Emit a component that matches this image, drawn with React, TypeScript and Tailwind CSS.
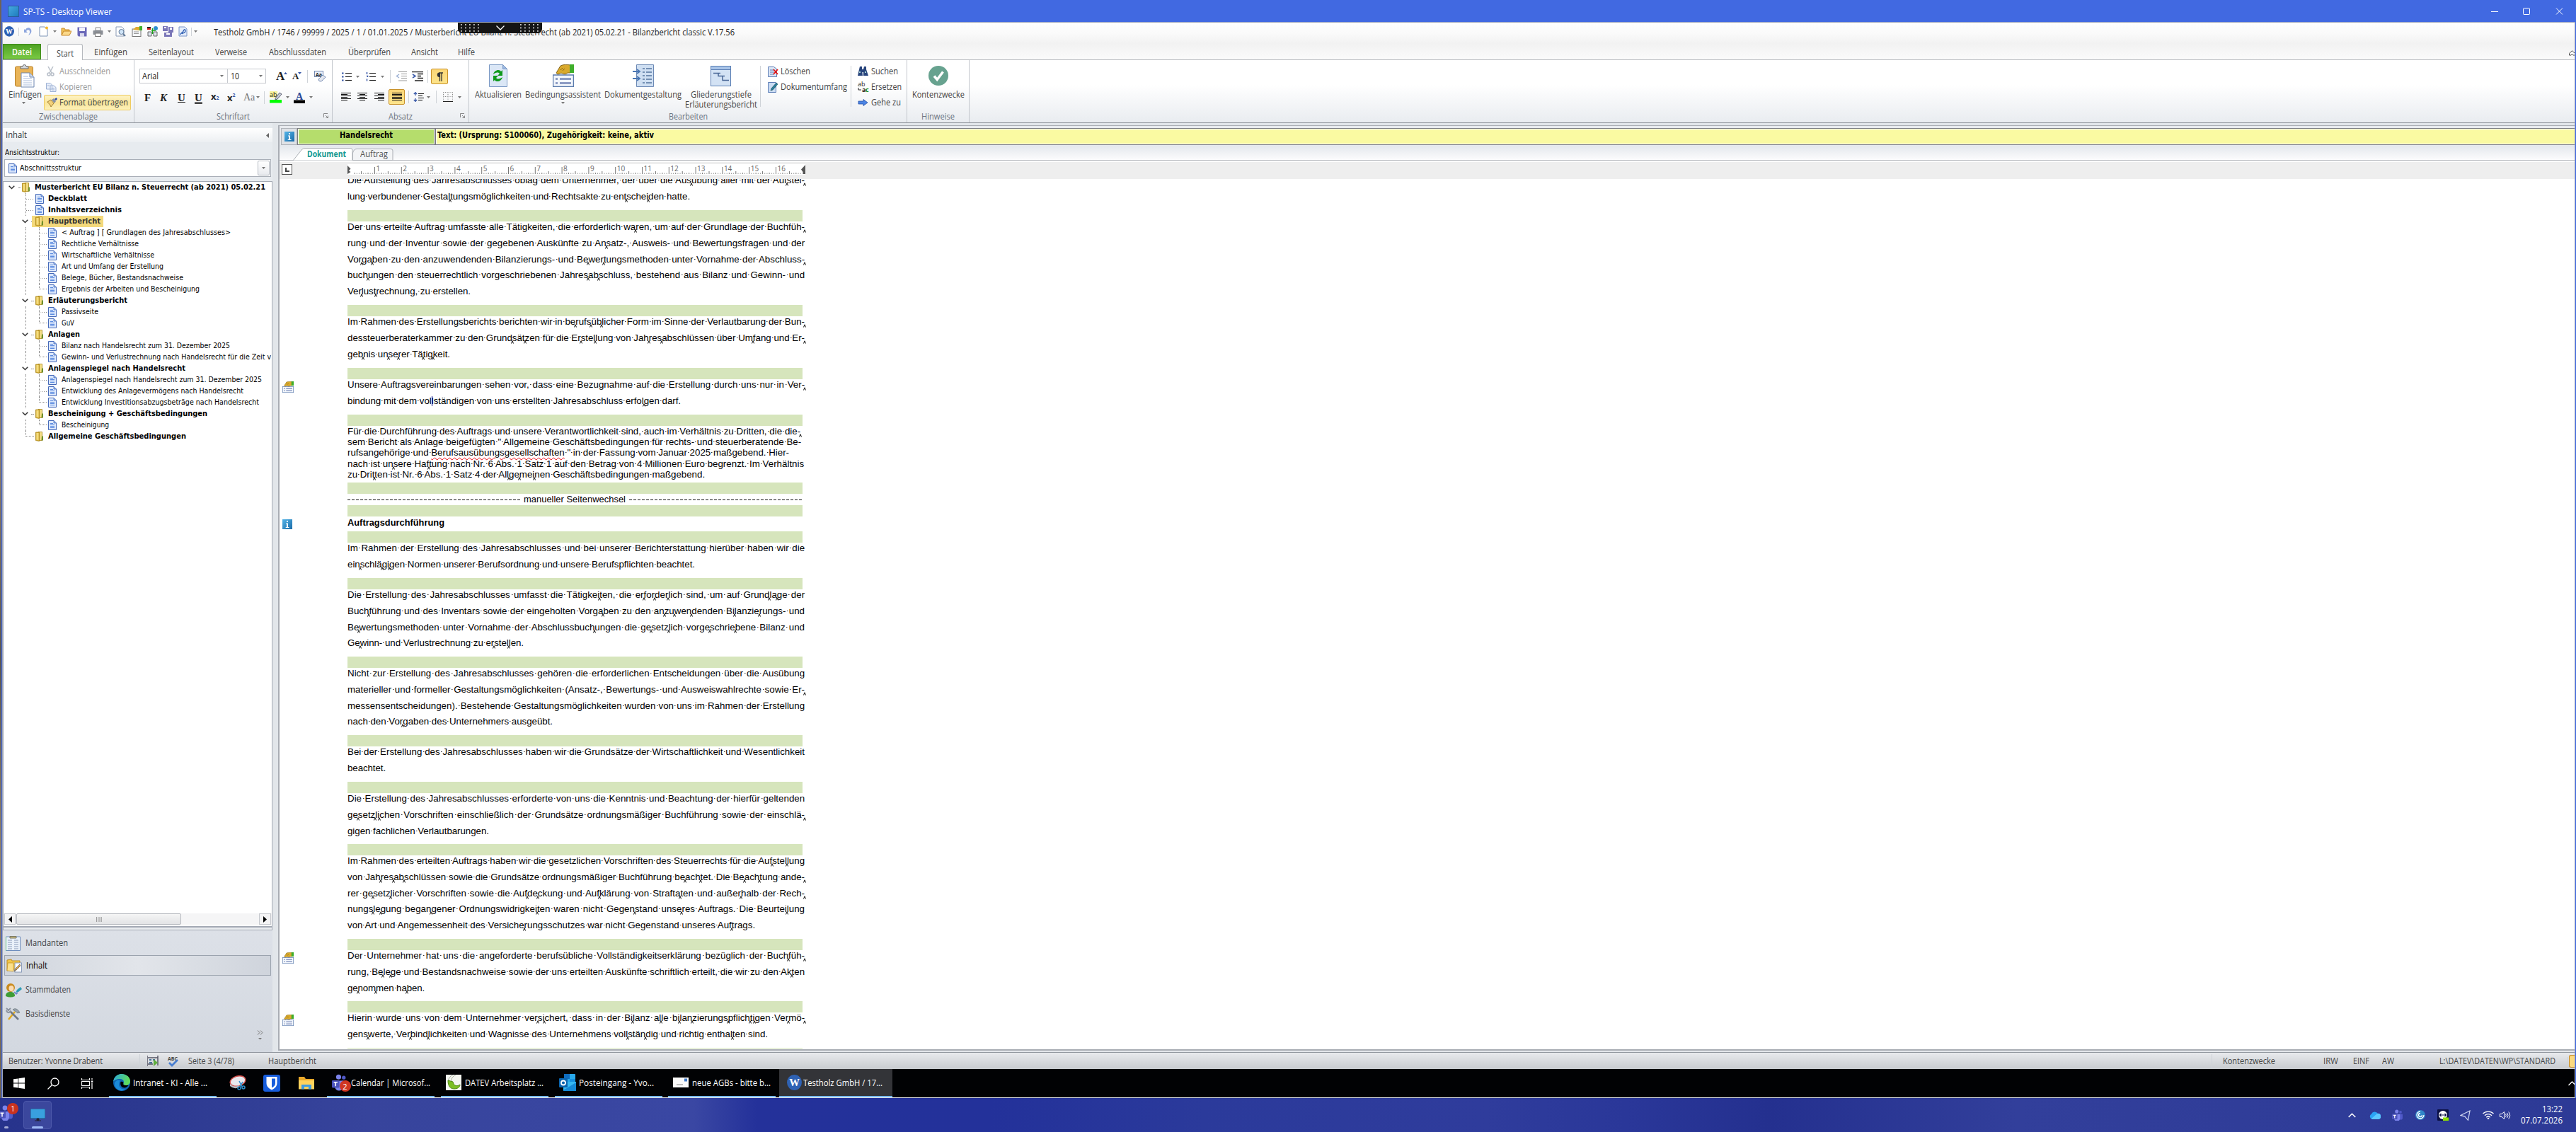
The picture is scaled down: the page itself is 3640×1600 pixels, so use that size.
import React, { useLayoutEffect, useRef, ReactNode } from "react";

const UI = "font-['Open_Sans','Noto_Sans',sans-serif]";
const TAHOMA = "font-['DejaVu_Sans_Condensed','DejaVu_Sans',sans-serif]";

/* Stretches or narrows a single line of text so that it fills its box. */
function Fit({ children, className = "" }: { children: ReactNode; className?: string }) {
  const box = useRef<HTMLSpanElement>(null);
  const txt = useRef<HTMLSpanElement>(null);
  useLayoutEffect(() => {
    const b = box.current, t = txt.current;
    if (!b || !t) return;
    t.style.transform = "none";
    t.style.transform = `scaleX(${b.clientWidth / t.getBoundingClientRect().width})`;
  }, [children]);
  return (
    <span ref={box} className={`block shrink-0 whitespace-nowrap ${className}`}>
      <span ref={txt} className="inline-block origin-left">{children}</span>
    </span>
  );
}

/* One justified line of the report; "^" marks a soft hyphen, "~" the text cursor. */
function Line({ text, className = "w-[646px] h-[23px] leading-[23px]" }: { text: string; className?: string }) {
  const box = useRef<HTMLDivElement>(null);
  const txt = useRef<HTMLSpanElement>(null);
  useLayoutEffect(() => {
    const b = box.current, t = txt.current;
    if (!b || !t) return;
    t.style.wordSpacing = "0px";
    t.style.letterSpacing = "0px";
    const diff = b.clientWidth - t.getBoundingClientRect().width;
    const gaps = (text.match(/ /g) || []).length;
    if (gaps && diff > 0) t.style.wordSpacing = `${diff / gaps}px`;
    else t.style.letterSpacing = `${diff / text.replace(/[\^~_]/g, "").length}px`;
  }, [text]);
  return (
    <div ref={box} className={`whitespace-pre ${className}`}>
      <span ref={txt} className="inline-block">
        {text.split(/([ ^~]|_[^_]+_)/).map((p, i) =>
          p === " " ? (
            <span key={i} className="bg-[linear-gradient(#333,#333)] bg-[length:1.5px_1.2px] bg-center bg-no-repeat"> </span>
          ) : p === "^" ? (
            <span key={i} className="relative">
              <svg className="absolute top-[11px] -left-[2px]" width="4" height="5" viewBox="0 0 4 5" fill="none" stroke="#111"><path d="M.5 4.500 2 .8 3.500 4.500" /></svg>
            </span>
          ) : p === "~" ? (
            <span key={i} className="relative"><span className="absolute left-0 top-px h-[14px] w-px bg-[#000080]" /></span>
          ) : p.startsWith("_") && p.length > 2 ? (
            <span key={i} className="underline decoration-red-600 decoration-wavy decoration-[0.6px] underline-offset-2">{p.slice(1, -1)}</span>
          ) : (
            p
          )
        )}
      </span>
    </div>
  );
}

const Caret = ({ className = "" }) => (
  <svg className={`shrink-0 ${className}`} width="5" height="3" viewBox="0 0 5 3"><path d="M0 0h5L2.500 3z" fill="#777" /></svg>
);
const Sep = ({ className = "" }) => <span className={`w-px shrink-0 bg-[#cfd3d8] ${className}`} />;

const Page = ({ s = 14, className = "" }) => (
  <svg className={`shrink-0 ${className}`} width={s * 0.86} height={s} viewBox="0 0 12 14">
    <path d="M.5.5h7.500l3.500 3.500v9.500H.5z" fill="#dbe7fb" stroke="#4468b8" />
    <path d="M8 .5V4h3.500" fill="#8fb0ea" stroke="#4468b8" strokeWidth=".7" />
    <path d="M3 4.500h4M3 6.500h6M3 8.500h6M3 10.500h6" stroke="#5b8be0" />
  </svg>
);
const Folder = () => (
  <svg className="shrink-0" width="12" height="14" viewBox="0 0 12 14">
    <path d="M4 .5h5.500v12H4z" fill="#f1dc84" stroke="#a88418" strokeWidth=".8" />
    <path d="M.5 1h5v12.500l-5-1z" fill="#d8b038" stroke="#a88418" strokeWidth=".8" />
    <path d="M1.500 2h3v10l-3-.500z" fill="#f3dc80" />
    <path d="M9 6.500h2v6H8.500z" fill="#6f8f2c" />
  </svg>
);
const Info = ({ className = "" }) => (
  <svg className={`shrink-0 ${className}`} width="14" height="14" viewBox="0 0 14 14">
    <defs><linearGradient id="inf" x1="0" y1="0" x2="1" y2="1"><stop stopColor="#52b4e8" /><stop offset="1" stopColor="#1c6ca8" /></linearGradient></defs>
    <rect width="14" height="14" fill="url(#inf)" />
    <path d="M6 2h2v2H6zM5 5.500h3V11h1.500v1H4.700v-1H6V6.500H5z" fill="#fff" />
  </svg>
);
const Assist = ({ w = 16, h = 16, className = "" }) => (
  <svg className={`shrink-0 ${className}`} width={w} height={h} viewBox="0 0 30 32" preserveAspectRatio="none">
    <rect x=".5" y="15" width="29" height="16.500" fill="#f2f6fc" stroke="#5b7bad" strokeWidth="1.500" />
    <path d="M4 20.500h3M4 26.500h3M10 20.500h16M10 26.500h16" stroke="#8d9cc4" strokeWidth="3" />
    <path d="M5 12c2-3 4-7 6-10 4-2 9-2 14-1v11h-4c-2 2-5 2-7 1-1-1-3-1-4 0l-3 1z" fill="#d9a92c" stroke="#7a5a10" strokeWidth=".9" />
    <path d="M11 8l3-3M14 9l3-3" stroke="#7a5a10" strokeWidth=".9" />
    <path d="M24 0h6v12h-6z" fill="#3fae2a" />
  </svg>
);
const WBadge = ({ s = 14, className = "" }) => (
  <svg className={`shrink-0 overflow-visible ${className}`} width={s} height={s * 1.05} viewBox="0 0 20 21">
    <ellipse cx="10" cy="10.500" rx="10" ry="10.500" fill="#2f62b4" />
    <text x="10" y="15.500" textAnchor="middle" fontSize="14" fontWeight="700" fill="#fff" className="font-['Liberation_Serif',serif]">W</text>
  </svg>
);
const Lines = ({ rows, className = "" }: { rows: [number, number][]; className?: string }) => (
  <svg className={`shrink-0 ${className}`} width="14" height="12" viewBox="0 0 14 12" shapeRendering="crispEdges">
    {rows.map(([a, b], i) => <path key={i} d={`M${a} ${i * 2 + 0.5}H${b}`} stroke="#111" />)}
  </svg>
);
const Teams = ({ w = 22 }) => (
  <svg className="shrink-0" width={w} height={w * 1.1} viewBox="0 0 20 22">
    <circle cx="9" cy="4" r="3.400" fill="#7b83eb" /><circle cx="16" cy="5" r="2.500" fill="#5059c9" />
    <path d="M13 9h7v7a3.500 3.500 0 0 1-7 0z" fill="#5059c9" />
    <path d="M4 9h11v8a5 5 0 0 1-11 0z" fill="#7b83eb" />
    <rect y="8.500" width="10" height="10" rx="1" fill="#4b53bc" />
    <path d="M2.500 11.200h5M5 11.200V16.500" stroke="#fff" strokeWidth="1.500" />
  </svg>
);

function TitleBar() {
  return (
    <div className={`flex h-[31px] shrink-0 items-center bg-[#4169e1] pl-[9px] text-white ${UI}`}>
      <span className="h-4 w-4 bg-linear-to-br from-[#46a8e0] to-[#1d7dbd] border border-[#2b5a9c]" />
      <Fit className="ml-[6px] w-[125px] text-[13px] leading-4">SP-TS - Desktop Viewer</Fit>
      <div className="flex-1" />
      <svg width="102" height="12" viewBox="0 0 102 12" fill="none" stroke="#fff" className="mr-[18px]"><path d="M0 6.500h10M92 1.500l9 9M101 1.500l-9 9" /><rect x="45.500" y="1.500" width="9" height="9" rx="1" /></svg>
    </div>
  );
}

function QuickBar() {
  return (
    <div className={`relative flex h-[30px] shrink-0 items-center bg-linear-to-b from-white via-[#fafafa] to-[#f2f2f2] pb-[5px] pl-[2px] ${UI}`}>
      <WBadge s={14} />
      <Sep className="ml-[6px] h-3 bg-[#aaa]" />
      <svg className="ml-[6px]" width="13" height="13" viewBox="0 0 13 13"><path d="M1 3v5h5L4 6c2-3 6-2 5 2-.300 1.500-1 2.500-2 4 4-2 5.500-6 3.500-9S4 1 2.500 4.500z" fill="#8ea6dd" /></svg>
      <svg className="ml-[9px]" width="14" height="15" viewBox="0 0 14 15"><path d="M1 1h7l4 3v10H1z" fill="#fff" stroke="#7d93b5" /><circle cx="11" cy="2.500" r="2" fill="#f5b82e" /></svg>
      <Caret className="ml-[6px]" />
      <svg className="ml-[6px]" width="15" height="13" viewBox="0 0 15 13"><path d="M1 12V2h4l1 2h6v3" fill="#f0c256" stroke="#c98a2b" /><path d="M1 12 4 6h11l-3 6z" fill="#fbd98a" stroke="#c98a2b" /></svg>
      <svg className="ml-[8px]" width="14" height="14" viewBox="0 0 14 14"><path d="M.5.5h13v13H2l-1.500-1.500z" fill="#6a68b8" /><path d="M3 1h8v5H3z" fill="#f4f4fb" /><path d="M4 9h6v5H4z" fill="#d9d9ee" /></svg>
      <svg className="ml-[8px]" width="15" height="14" viewBox="0 0 15 14"><path d="M4 1h7v4H4z" fill="#fff" stroke="#888" /><rect x=".5" y="5" width="14" height="6" rx="1" fill="#8b8f96" /><path d="M3.500 9h8v4.500h-8z" fill="#fff" stroke="#777" /></svg>
      <Caret className="ml-[6px]" />
      <svg className="ml-[6px]" width="15" height="15" viewBox="0 0 15 15"><path d="M1 1h8l3 3v10H1z" fill="#fff" stroke="#8a9bb5" /><circle cx="8.500" cy="8" r="3.500" fill="#cfe4f7" stroke="#5f7897" /><path d="m11 11 3 3" stroke="#5f7897" strokeWidth="2" /></svg>
      <svg className="ml-[8px]" width="15" height="15" viewBox="0 0 15 15"><rect x="1" y="4" width="12" height="10.500" fill="#f4f6f9" stroke="#777" /><path d="M2 5 6 1h6l-1 5z" fill="#e0a92e" /><path d="M11 0h4v6h-4z" fill="#3fae2a" /><path d="M3 8h7M3 10.500h7" stroke="#999" /></svg>
      <svg className="ml-[7px]" width="15" height="15" viewBox="0 0 15 15"><path d="M0 1h5v2H0z" fill="#222" /><path d="M0 3h5v2H0z" fill="#e32020" /><circle cx="12" cy="3" r="3" fill="#2e8fd0" /><path d="M1 8h5v6H1zM9 8h5v6H9z" fill="#dfe5ef" stroke="#444" strokeWidth=".8" /><path d="M6 6h6M7.500 3v8" stroke="#17a317" strokeWidth="1.500" /></svg>
      <svg className="ml-[7px]" width="15" height="15" viewBox="0 0 15 15"><path d="M0 0h7v7H0zM8 1h7v8H8zM2 9h11v6H2z" fill="#7b77b8" /><path d="M2 1h3v2H2zM10 2h3v3h-3zM5 10h5v2H5z" fill="#fff" /></svg>
      <svg className="ml-[7px]" width="13" height="15" viewBox="0 0 13 15"><path d="M1 1h8l3 3v10H1z" fill="#e6eefb" stroke="#7b95c6" /><path d="M3 12c0-3 3-2 4-5s3-3 3 0-4 2-5 4" fill="none" stroke="#2f5fb3" strokeWidth="1.300" /></svg>
      <Sep className="ml-[5px] h-3 bg-[#999]" />
      <Caret className="ml-[3px]" />
      <Fit className="ml-[23px] w-[736px] text-[13px] leading-4 text-[#222]">Testholz GmbH / 1746 / 99999 / 2025 / 1 / 01.01.2025 / Musterbericht EU Bilanz n. Steuerrecht (ab 2021) 05.02.21 - Bilanzbericht classic V.17.56</Fit>
      <div className="absolute left-[643px] top-0 flex h-[15px] w-[119px] items-center justify-between rounded-b-md bg-[#151515] px-[4px]">
        <Dots />
        <svg width="12" height="7" viewBox="0 0 12 7" fill="none" stroke="#fff" strokeWidth="1.300"><path d="m.5.5 5.500 5.500L11.500.5" /></svg>
        <Dots />
      </div>
    </div>
  );
}
const Dots = () => (
  <svg width="27" height="11" viewBox="0 0 27 11">
    {[0, 1, 2].map((r) => [0, 1, 2, 3, 4].map((c) => <rect key={`${r}${c}`} x={c * 6} y={r * 4.5} width="1.800" height="1.800" fill="#ccc" />))}
  </svg>
);

function Tabs() {
  const t = "text-[13px] leading-[14px] text-[#444]";
  return (
    <div className={`flex h-[23px] shrink-0 items-end border-b border-[#b6b9be] bg-linear-to-b from-[#f2f2f2] to-[#fbfbfb] ${UI}`}>
      <div className="flex h-[22px] w-[54px] items-center justify-center border border-[#3f8a1a] bg-linear-to-b from-[#4ea322] to-[#79c943]">
        <Fit className="w-[28px] text-[13px] font-semibold leading-4 text-white">Datei</Fit>
      </div>
      <div className="-mb-px ml-[9px] flex h-[23px] w-[50px] items-center justify-center rounded-t-[3px] border border-b-0 border-[#b6b9be] bg-white pt-px">
        <Fit className={`w-[24px] ${t}`}>Start</Fit>
      </div>
      <div className="flex h-[18px] items-start">
        <Fit className={`ml-[16px] w-[47px] ${t}`}>Einfügen</Fit>
        <Fit className={`ml-[30px] w-[64px] ${t}`}>Seitenlayout</Fit>
        <Fit className={`ml-[30px] w-[45px] ${t}`}>Verweise</Fit>
        <Fit className={`ml-[31px] w-[81px] ${t}`}>Abschlussdaten</Fit>
        <Fit className={`ml-[31px] w-[60px] ${t}`}>Überprüfen</Fit>
        <Fit className={`ml-[29px] w-[38px] ${t}`}>Ansicht</Fit>
        <Fit className={`ml-[28px] w-[24px] ${t}`}>Hilfe</Fit>
      </div>
      <div className="flex-1" />
      <svg className="mb-[5px]" width="8" height="8" viewBox="0 0 8 8" fill="#fff" stroke="#444"><path d="M.5 7V4.500L4.500.8l4 3.700V7H6L4.500 5.500 3 7z" /></svg>
    </div>
  );
}

function Group({ label, lw, w, children, launcher }: { label: string; lw: string; w: string; children: ReactNode; launcher?: boolean }) {
  return (
    <div className={`flex h-[88px] shrink-0 flex-col border-r border-[#c3c7cd] ${w}`}>
      <div className="h-[72px]">{children}</div>
      <div className="relative flex h-4 justify-center">
        <Fit className={`text-[12.500px] leading-4 text-[#6b7480] ${lw}`}>{label}</Fit>
        {launcher && (
          <svg className="absolute right-[5px] top-[3px]" width="7" height="7" viewBox="0 0 7 7" fill="none" stroke="#888"><path d="M.5 6V.5H6M3 3l3.500 3.500M6.500 3.500v3h-3" /></svg>
        )}
      </div>
    </div>
  );
}

const RT = "text-[12.500px] leading-4";
const serif = "font-['Liberation_Serif',serif] font-bold text-[#222] text-[15px] leading-[16px]";

function Ribbon() {
  return (
    <div className={`flex h-[89px] shrink-0 border-b border-[#8f949b] bg-linear-to-b from-white from-40% to-[#e9ecf0] text-[#444] ${UI}`}>
      <Group label="Zwischenablage" lw="w-[83px]" w="w-[186px]">
        <div className="flex">
          <div className="flex w-[58px] shrink-0 flex-col items-center pt-[6px]">
            <svg className="ml-[5px]" width="29" height="33" viewBox="0 0 29 33">
              <rect x=".5" y="3" width="25" height="28" rx="2" fill="#e9b458" stroke="#b9822b" />
              <path d="M8 6V3h3a2.500 2.500 0 0 1 5 0h3v3z" fill="#d3d8de" stroke="#666" />
              <path d="M9 12h12l6 6v14H9z" fill="#fff" stroke="#6c86b1" /><path d="M21 12v6h6" fill="#cfdcf0" stroke="#6c86b1" />
              <path d="M12 17h7M12 20h12M12 23h12M12 26h12M12 29h12" stroke="#a9bcdb" />
            </svg>
            <Fit className={`ml-[5px] mt-[2px] w-[47px] ${RT}`}>Einfügen</Fit>
            <Caret className="mt-[2px]" />
          </div>
          <div className="flex flex-col gap-0 pt-[5px]">
            <div className="flex h-[22px] items-center pl-[4px]">
              <svg width="11" height="14" viewBox="0 0 11 14" fill="none" stroke="#b8bfc9" strokeWidth="1.500"><path d="m2 0 5 9M9 0 4 9" /><circle cx="3" cy="11" r="2" /><circle cx="8" cy="11" r="2" /></svg>
              <Fit className={`ml-[7px] w-[72px] text-[#9a9a9a] ${RT}`}>Ausschneiden</Fit>
            </div>
            <div className="flex h-[22px] items-center pl-[3px]">
              <svg width="15" height="13" viewBox="0 0 15 13" fill="#e9effa" stroke="#9db1d4"><path d="M.5.5H6L8.500 3v6h-8zM6 4h5l3 2.500v6H6z" /><path d="M8 8h4M8 10h4M2 4h3" /></svg>
              <Fit className={`ml-[4px] w-[46px] text-[#9a9a9a] ${RT}`}>Kopieren</Fit>
            </div>
            <div className="flex h-[22px] w-[123px] items-center rounded-[2px] border border-[#eecb62] bg-linear-to-b from-[#fdf3c6] via-[#fbe699] to-[#fcf0b8] pl-[3px]">
              <svg width="15" height="14" viewBox="0 0 15 14"><path d="m1 6 5-3 4 5-4 5-1.500-3z" fill="#f3d179" stroke="#8a6a22" strokeWidth=".8" /><path d="m7 3 3-2 3 4-2 3z" fill="#8590a5" /><path d="m11 2 2.500-2L15 2l-2 2z" fill="#2945a5" /></svg>
              <Fit className={`ml-[3px] w-[97px] ${RT}`}>Format übertragen</Fit>
            </div>
          </div>
        </div>
      </Group>

      <Group label="Schriftart" lw="w-[47px]" w="w-[280px]" launcher>
        <div className="flex flex-col pt-[12px] text-[#222]">
          <div className="flex h-[21px] items-center pl-[7px]">
            <div className="flex h-[21px] w-[125px] items-center justify-between border border-[#c6c9ce] bg-white pl-[3px] pr-[5px]"><Fit className={`w-[23px] ${RT}`}>Arial</Fit><Caret /></div>
            <div className="-ml-px flex h-[21px] w-[55px] items-center justify-between border border-[#c6c9ce] bg-white pl-[4px] pr-[4px]"><Fit className={`w-[12px] ${RT}`}>10</Fit><Caret /></div>
            <span className={`ml-[14px] w-[11px] ${serif} !text-[17px]`}>A</span>
            <svg className="-mt-2" width="5" height="3" viewBox="0 0 5 3"><path d="M0 3h5L2.500 0z" fill="#3858a8" /></svg>
            <span className={`ml-[7px] w-[8px] ${serif} !text-[13px]`}>A</span>
            <svg className="-mt-2" width="5" height="3" viewBox="0 0 5 3"><path d="M0 0h5L2.500 3z" fill="#3858a8" /></svg>
            <Sep className="ml-[8px] h-[18px]" />
            <svg className="ml-[9px] overflow-visible" width="17" height="16" viewBox="0 0 17 16"><rect x=".5" y=".5" width="12" height="8" fill="#eaf0fa" stroke="#7288b0" /><text x="6.500" y="7.500" fontSize="7" fontWeight="700" textAnchor="middle" fill="#222">Aa</text><path d="m6 12 6-6 4 3-6 6-3-.5z" fill="#e3e7ef" stroke="#7288b0" /></svg>
          </div>
          <div className="mt-[9px] flex h-[21px] items-center pl-[14px]">
            <span className={`w-[10px] ${serif}`}>F</span>
            <span className={`ml-[12px] w-[12px] italic ${serif}`}>K</span>
            <span className={`ml-[13px] w-[11px] underline ${serif}`}>U</span>
            <span className={`ml-[13px] w-[11px] underline decoration-double ${serif}`}>U</span>
            <span className="ml-[12px] flex w-[13px] items-baseline text-[13px] font-bold leading-4">x<span className="text-[7px] text-[#3858a8]">2</span></span>
            <span className="ml-[10px] flex w-[14px] items-start text-[13px] font-bold leading-4">x<span className="-mt-[3px] text-[7px] text-[#3858a8]">2</span></span>
            <span className="ml-[9px] w-[17px] font-['Liberation_Serif',serif] text-[14px] leading-4 text-[#777]">Aa</span>
            <Caret className="ml-[1px]" />
            <Sep className="ml-[6px] h-[18px]" />
            <svg className="ml-[7px] overflow-visible" width="18" height="17" viewBox="0 0 18 17"><rect y="12" width="17" height="4.500" fill="#0f0" /><rect width="11" height="9" fill="#f6f29a" /><text x="0" y="8" fontSize="9" fill="#222">ab</text><path d="m8 10 6-8 3 2-6 7-3 1z" fill="#c3cad8" stroke="#445" strokeWidth=".8" /></svg>
            <Caret className="ml-[5px]" />
            <svg className="ml-[6px] overflow-visible" width="17" height="17" viewBox="0 0 17 17"><rect y="12.500" width="16" height="4.500" fill="#000" /><text x="8" y="11.500" fontSize="14" fontWeight="700" textAnchor="middle" fill="#2a4a98" className="font-['Liberation_Serif',serif]">A</text></svg>
            <Caret className="ml-[5px]" />
          </div>
        </div>
      </Group>

      <Group label="Absatz" lw="w-[34px]" w="w-[193px]" launcher>
        <div className="pt-[12px]">
          <div className="flex h-[22px] items-center pl-[13px]">
            <svg width="14" height="13" viewBox="0 0 14 13"><path d="M0 1.500h2.500M0 6.500h2.500M0 11.500h2.500" stroke="#3858a8" strokeWidth="2.200" /><path d="M5 1.500h9M5 6.500h9M5 11.500h9" stroke="#111" /></svg>
            <Caret className="ml-[6px]" />
            <svg className="ml-[9px]" width="15" height="13" viewBox="0 0 15 13"><path d="M1.500 0v3M1 5.500h1.500V7M1.500 9.500v3" stroke="#3858a8" strokeWidth="1.500" fill="none" /><path d="M5 1.500h9M5 6.500h9M5 11.500h9" stroke="#111" /></svg>
            <Caret className="ml-[6px]" />
            <Sep className="ml-[8px] h-[18px]" />
            <svg className="ml-[7px]" width="16" height="14" viewBox="0 0 16 14" stroke="#999" fill="none"><path d="M4 .5h12M8 3.500h8M8 6.500h8M8 9.500h8M4 13h12" /><path d="M5 4 1.500 6.500 5 9" stroke="#9db1d4" strokeWidth="1.500" /></svg>
            <svg className="ml-[7px]" width="16" height="14" viewBox="0 0 16 14" stroke="#222" fill="none"><path d="M0 .5h16M8 3.500h8M8 6.500h5M8 9.500h8M4 13h12" strokeWidth="1.300" /><path d="m1 4 4 2.500L1 9" stroke="#3858a8" strokeWidth="1.500" /></svg>
            <Sep className="ml-[6px] h-[18px]" />
            <span className="ml-[4px] flex h-[22px] w-[24px] items-center justify-center rounded-[2px] border border-[#c9922b] bg-linear-to-b from-[#fbd676] to-[#fde58c]">
              <svg width="10" height="13" viewBox="0 0 10 13"><path d="M4 1h6M5.500 1v12M8 1v12" stroke="#333" strokeWidth="1.300" /><path d="M5 .5v6.500A3.200 3.200 0 0 1 5 .5z" fill="#333" /></svg>
            </span>
          </div>
          <div className="mt-[7px] flex h-[22px] items-center pl-[12px]">
            <Lines rows={[[0, 14], [0, 9], [0, 14], [0, 9], [0, 14], [0, 9]]} />
            <Lines className="ml-[9px]" rows={[[0, 14], [3, 11], [0, 14], [3, 11], [0, 14], [3, 11]]} />
            <Lines className="ml-[10px]" rows={[[0, 14], [5, 14], [0, 14], [5, 14], [0, 14], [5, 14]]} />
            <span className="ml-[6px] flex h-[22px] w-[23px] items-center justify-center rounded-[2px] border border-[#c9922b] bg-linear-to-b from-[#fbd676] to-[#fde58c]">
              <Lines rows={[[0, 14], [0, 14], [0, 14], [0, 14], [0, 14], [0, 14]]} />
            </span>
            <Sep className="ml-[5px] h-[18px]" />
            <svg className="ml-[6px]" width="16" height="14" viewBox="0 0 16 14" fill="none"><path d="M3 0v5M3 9v5M.8 3 3 .800 5.200 3M.8 11 3 13.200 5.200 11" stroke="#3858a8" strokeWidth="1.300" /><path d="M7 2.500h8M7 5.500h6M7 8.500h8M7 11.500h6" stroke="#111" /></svg>
            <Caret className="ml-[3px]" />
            <Sep className="ml-[8px] h-[18px]" />
            <svg className="ml-[9px]" width="14" height="14" viewBox="0 0 14 14" fill="none" stroke="#888" strokeDasharray="1 1.500"><path d="M.5.500h13M.5 6.500h13M.5.500v12M7 .5v12M13.500.500v12" /><path d="M0 13.500h14" stroke="#222" strokeDasharray="none" /></svg>
            <Caret className="ml-[7px]" />
          </div>
        </div>
      </Group>

      <Group label="Bearbeiten" lw="w-[55px]" w="w-[619px]">
        <div className="flex">
          <div className="flex w-[75px] flex-col items-center pl-[7px] pt-[6px]">
            <svg width="26" height="32" viewBox="0 0 26 32"><path d="M.5.500h19l6 6v25h-25z" fill="#dbe7f6" stroke="#7b99c4" /><path d="M19.500.500v6h6z" fill="#9db9e2" stroke="#7b99c4" /><path d="M6 14c1-6 9-8 11-4l2-2v8h-7l3-3c-3-3-6-1-9 1zM19 18c-1 6-9 8-11 4l-2 2v-8h7l-3 3c3 3 6 1 9-1z" fill="#0f9a1c" /></svg>
            <Fit className={`mt-[3px] w-[66px] ${RT}`}>Aktualisieren</Fit>
          </div>
          <div className="ml-[4px] flex w-[107px] shrink-0 flex-col items-center pt-[6px]">
            <Assist w={30} h={32} />
            <Fit className={`mt-[3px] w-[107px] ${RT}`}>Bedingungsassistent</Fit>
            <Caret className="mt-[2px]" />
          </div>
          <div className="ml-[5px] flex w-[109px] shrink-0 flex-col items-center pt-[6px]">
            <svg width="30" height="32" viewBox="0 0 30 32"><path d="M5.500.500h24v31h-24z" fill="#cfdff2" stroke="#6c89b5" /><path d="M14 6h3M14 11h3M14 16h3M14 21h3M14 26h3M19 6h8M19 11h8M19 16h8M19 21h8M19 26h8" stroke="#56759f" strokeWidth="1.500" /><path d="M0 10h9M0 20h9M6 7l4 3-4 3M6 17l4 3-4 3" stroke="#4a76b3" strokeWidth="1.800" fill="none" /></svg>
            <Fit className={`mt-[3px] w-[109px] ${RT}`}>Dokumentgestaltung</Fit>
          </div>
          <div className="ml-[5px] flex w-[102px] shrink-0 flex-col items-center pt-[8px]">
            <svg width="30" height="30" viewBox="0 0 30 30"><rect x=".5" y=".5" width="28" height="28" fill="#d3e2f4" stroke="#5b7fb4" /><rect x="1" y="1" width="27" height="4" fill="#a9c5e8" /><path d="M1 5.500h27" stroke="#5b7fb4" /><path d="M4 10.500h7v4h6v6h9M11 10.500h3M17 14.500h3" stroke="#4a6796" strokeWidth="1.500" fill="none" /></svg>
            <Fit className={`mt-[4px] w-[86px] !leading-[14px] ${RT}`}>Gliederungstiefe</Fit>
            <Fit className={`w-[102px] !leading-[13px] ${RT}`}>Erläuterungsbericht</Fit>
          </div>
          <Sep className="ml-[4px] mt-[8px] h-[58px]" />
          <div className="ml-[10px] flex flex-col pt-[5px]">
            <div className="flex h-[22px] items-center"><svg width="15" height="15" viewBox="0 0 15 15"><path d="M.5.500h8l4 3v11H.5z" fill="#dce6f5" stroke="#5c7db5" /><path d="M3 5h6M3 8h6M3 11h6" stroke="#5c7db5" /><path d="m8 4 6 7M14 4l-6 7" stroke="#e31616" strokeWidth="1.800" /></svg><Fit className={`ml-[3px] w-[42px] ${RT}`}>Löschen</Fit></div>
            <div className="flex h-[22px] items-center"><svg width="15" height="15" viewBox="0 0 15 15"><path d="M.5.500h11v14H.5z" fill="#cbdcf3" stroke="#5c7db5" /><path d="m4 12 1-3 7-8 2 2-7 8z" fill="#2c7d9d" stroke="#144" strokeWidth=".6" /></svg><Fit className={`ml-[3px] w-[94px] ${RT}`}>Dokumentumfang</Fit></div>
          </div>
          <Sep className="ml-[5px] mt-[8px] h-[58px]" />
          <div className="ml-[9px] flex flex-col pt-[5px]">
            <div className="flex h-[22px] items-center"><svg width="15" height="14" viewBox="0 0 15 14"><path d="M3 0h3v4l1 9H0l2-9zM9 0h3v4l3 9H8V4z" fill="#27447c" /><path d="M6 4h3v4H6z" fill="#27447c" /><path d="M2 8h2M10 8h2" stroke="#cfe" strokeWidth="1.500" /></svg><Fit className={`ml-[4px] w-[38px] ${RT}`}>Suchen</Fit></div>
            <div className="flex h-[22px] items-center"><svg className="overflow-visible" width="15" height="16" viewBox="0 0 15 16"><text x="0" y="7" fontSize="9" fill="#222">ab</text><text x="6" y="15" fontSize="9" fontWeight="700" fill="#222">a</text><text x="11" y="15" fontSize="9" fontWeight="700" fill="#178f17">c</text><path d="M1 9v3h4" stroke="#222" fill="none" /></svg><Fit className={`ml-[4px] w-[43px] ${RT}`}>Ersetzen</Fit></div>
            <div className="flex h-[22px] items-center"><svg width="15" height="10" viewBox="0 0 15 10"><path d="M1 3h7V.5L14 5 8 9.500V7H1z" fill="#4b84e4" stroke="#234ea5" strokeWidth=".8" /></svg><Fit className={`ml-[4px] w-[42px] ${RT}`}>Gehe zu</Fit></div>
          </div>
        </div>
      </Group>

      <Group label="Hinweise" lw="w-[47px]" w="w-[88px]">
        <div className="flex flex-col items-center pt-[8px]">
          <svg width="28" height="28" viewBox="0 0 28 28"><circle cx="14" cy="14" r="14" fill="#67a28f" /><path d="m8 14.500 4.200 5L20.500 8.500" stroke="#fff" strokeWidth="3.500" fill="none" /></svg>
          <Fit className={`mt-[5px] w-[74px] ${RT}`}>Kontenzwecke</Fit>
        </div>
      </Group>
    </div>
  );
}

/* [level, folder?, open?, label, width class] */
const TREE: [number, boolean, boolean, string, string][] = [
  [0, true, true, "Musterbericht EU Bilanz n. Steuerrecht (ab 2021) 05.02.21", "w-[326px]"],
  [1, false, false, "Deckblatt", "w-[55px]"],
  [1, false, false, "Inhaltsverzeichnis", "w-[104px]"],
  [1, true, true, "Hauptbericht", "w-[74px]"],
  [2, false, false, "< Auftrag ] [ Grundlagen des Jahresabschlusses>", "w-[239px]"],
  [2, false, false, "Rechtliche Verhältnisse", "w-[109px]"],
  [2, false, false, "Wirtschaftliche Verhältnisse", "w-[131px]"],
  [2, false, false, "Art und Umfang der Erstellung", "w-[144px]"],
  [2, false, false, "Belege, Bücher, Bestandsnachweise", "w-[172px]"],
  [2, false, false, "Ergebnis der Arbeiten und Bescheinigung", "w-[195px]"],
  [1, true, true, "Erläuterungsbericht", "w-[112px]"],
  [2, false, false, "Passivseite", "w-[52px]"],
  [2, false, false, "GuV", "w-[18px]"],
  [1, true, true, "Anlagen", "w-[45px]"],
  [2, false, false, "Bilanz nach Handelsrecht zum 31. Dezember 2025", "w-[238px]"],
  [2, false, false, "Gewinn- und Verlustrechnung nach Handelsrecht für die Zeit v", "w-[296px]"],
  [1, true, true, "Anlagenspiegel nach Handelsrecht", "w-[194px]"],
  [2, false, false, "Anlagenspiegel nach Handelsrecht zum 31. Dezember 2025", "w-[283px]"],
  [2, false, false, "Entwicklung des Anlagevermögens nach Handelsrecht", "w-[257px]"],
  [2, false, false, "Entwicklung Investitionsabzugsbeträge nach Handelsrecht", "w-[279px]"],
  [1, true, true, "Bescheinigung + Geschäftsbedingungen", "w-[225px]"],
  [2, false, false, "Bescheinigung", "w-[67px]"],
  [1, true, false, "Allgemeine Geschäftsbedingungen", "w-[195px]"],
];

function TreeRow({ i }: { i: number }) {
  const [lvl, folder, open, label, w] = TREE[i];
  const bold = lvl < 2;
  const lastAll = i === TREE.length - 1;
  const lastSub = lvl === 2 && (i + 1 >= TREE.length || TREE[i + 1][0] !== 2);
  const hi = label === "Hauptbericht";
  return (
    <div className="flex h-4 items-center">
      {lvl === 0 ? (
        <span className="flex w-[26px] items-center pl-[7px]"><Chevron /><span className="ml-[5px] w-[4px] border-t border-dotted border-[#888]" /></span>
      ) : lvl === 1 ? (
        open ? (
          <span className="flex w-[45px] items-center pl-[26px]"><Chevron /><span className="ml-[4px] w-[4px] border-t border-dotted border-[#888]" /></span>
        ) : (
          <span className="flex h-4 w-[45px] pl-[31px]">
            <span className={`w-[12px] border-l border-dotted border-[#888] ${lastAll ? "h-2 border-b" : "h-4 bg-[repeating-linear-gradient(90deg,#888_0_1px,transparent_1px_3px)] bg-[length:100%_1px] bg-[position:0_8px] bg-no-repeat"}`} />
          </span>
        )
      ) : (
        <span className="flex h-4 w-[63px] pl-[31px]">
          <span className={`h-4 w-[19px] ${i < 22 ? "border-l border-dotted border-[#888]" : ""}`} />
          <span className={`w-[11px] border-l border-dotted border-[#888] ${lastSub ? "h-2 border-b" : "h-4 bg-[repeating-linear-gradient(90deg,#888_0_1px,transparent_1px_3px)] bg-[length:100%_1px] bg-[position:0_8px] bg-no-repeat"}`} />
        </span>
      )}
      <span className={`flex h-4 items-center ${hi ? "-ml-[5px] bg-[#f3d97c] pl-[5px] pr-[4px] text-[#333]" : ""}`}>
        {folder ? <Folder /> : <Page s={14} />}
        <Fit className={`text-[11px] leading-4 ${bold ? "ml-[6px] font-bold" : "ml-[7px]"} ${w}`}>{label}</Fit>
      </span>
    </div>
  );
}
const Chevron = () => <svg className="shrink-0" width="9" height="6" viewBox="0 0 9 6" fill="none" stroke="#333" strokeWidth="1.500"><path d="m.7.7 3.800 3.800L8.300.7" /></svg>;

function NavRow({ icon, label, w, active }: { icon: ReactNode; label: string; w: string; active?: boolean }) {
  return (
    <div className={`mx-[2px] flex shrink-0 items-center pl-[2px] ${active ? "mb-[3px] h-[29px] border border-[#9ba3ae] bg-linear-to-r from-[#d0d5dd] via-[#e2e5ea] to-[#cfd4dc] text-black" : "h-[34px] text-[#444]"}`}>
      <span className="w-[23px]">{icon}</span>
      <Fit className={`ml-[5px] text-[12.500px] leading-4 ${w}`}>{label}</Fit>
    </div>
  );
}

function Sidebar() {
  return (
    <div className={`flex w-[381px] shrink-0 flex-col bg-[#e7ebef] pt-[7px] text-black ${TAHOMA}`}>
      <div className={`flex h-[20px] items-center justify-between bg-linear-to-b from-white to-[#eceff2] pl-[4px] pr-[5px] ${UI}`}>
        <Fit className="w-[30px] text-[12.500px] leading-4 text-[#333]">Inhalt</Fit>
        <svg width="4" height="7" viewBox="0 0 4 7"><path d="M4 0v7L0 3.500z" fill="#666" /></svg>
      </div>
      <Fit className="ml-[3px] mt-[7px] w-[77px] text-[11px] leading-4">Ansichtsstruktur:</Fit>
      <div className="ml-[2px] mt-px flex h-[25px] w-[377px] items-center border border-[#a9afb8] bg-white pl-[5px]">
        <Page s={14} />
        <Fit className="ml-[4px] w-[87px] text-[11px] leading-4">Abschnittsstruktur</Fit>
        <span className="ml-auto mr-px flex h-[21px] w-[17px] items-center justify-center rounded-[2px] border border-[#b5bac2] bg-linear-to-b from-white to-[#e8eaee]"><Caret /></span>
      </div>
      <div className="mt-[6px] flex h-[1054px] shrink-0 flex-col overflow-hidden border border-[#a3a9b3] bg-white">
        {TREE.map((_, i) => <TreeRow key={i} i={i} />)}
        <div className="mt-auto mb-[2px] flex h-[16px] items-stretch bg-[#f5f5f6] pl-[1px] pr-[1px]">
          <span className="flex w-[16px] items-center justify-center border border-[#c5c8cd] bg-[#f3f3f4]"><svg width="5" height="9" viewBox="0 0 5 9"><path d="M5 0v9L0 4.500z" /></svg></span>
          <span className="ml-px flex w-[233px] items-center justify-center rounded-[2px] border border-[#b4b7bd] bg-linear-to-b from-[#f5f5f5] to-[#e2e3e5]"><svg width="8" height="7" viewBox="0 0 8 7"><path d="M.5 0v7M2.800 0v7M5 0v7M7.300 0v7" stroke="#888" strokeWidth=".8" /></svg></span>
          <span className="ml-auto flex w-[17px] items-center justify-center border border-[#c5c8cd] bg-[#f3f3f4]"><svg width="5" height="9" viewBox="0 0 5 9"><path d="M0 0v9l5-4.500z" /></svg></span>
        </div>
      </div>
      <div className={`flex min-h-0 flex-1 flex-col bg-linear-to-b from-[#dde1e8] to-[#d3d8e0] ${UI}`}>
        <div className="mb-px h-[5px] shrink-0 border border-[#a3a9b3] bg-[#e8ebef]" />
        <NavRow label="Mandanten" w="w-[60px]" icon={<svg width="21" height="22" viewBox="0 0 21 22"><path d="M.5 2h20v19.500H.5z" fill="#eaf1fa" stroke="#6d8dbd" /><path d="M0 2v20" stroke="#6cc287" strokeWidth="2" /><path d="M6 4V1.500h9V4z" fill="#cdbb7d" stroke="#776" /><path d="M3 7h6M3 10h6M3 13h6M3 16h6M12 7h6M12 10h6M12 13h6M12 16h6M3 19h6M12 19h6" stroke="#8a9cba" /></svg>} />
        <NavRow active label="Inhalt" w="w-[30px]" icon={<svg width="22" height="20" viewBox="0 0 22 20"><path d="M1 17V2l6-1 1 2h11v12H9z" fill="#f2c648" stroke="#bf8e23" /><path d="m1 17 1-11h8v12z" fill="#fbe08b" stroke="#bf8e23" strokeWidth=".7" /><rect x="12" y="6" width="9.500" height="13" fill="#fdfdff" stroke="#8a9cba" /><path d="m11 18 2-4 6-6 1 2-6 6z" fill="#e0a54b" stroke="#555" strokeWidth=".7" /></svg>} />
        <NavRow label="Stammdaten" w="w-[64px]" icon={<svg width="23" height="21" viewBox="0 0 23 21"><path d="M0 19c0-5 3-6 7-6s6 2 6 6q-6 3-13 0z" fill="#3f9c35" /><circle cx="7" cy="7" r="6" fill="#c98a1c" /><ellipse cx="8" cy="8" rx="3.500" ry="4" fill="#fbdcb5" /><path d="m14 14 2-4 5-4 2 3-5 4z" fill="#2f9cb5" /><path d="m12 13 3 3 2-2" stroke="#6779c4" fill="none" strokeWidth="1.500" /></svg>} />
        <NavRow label="Basisdienste" w="w-[63px]" icon={<svg width="22" height="20" viewBox="0 0 22 20"><path d="m4 18 9-11" stroke="#e2aa1e" strokeWidth="2.500" /><path d="m18 18-12-12" stroke="#6f7784" strokeWidth="2.500" /><path d="M1 2l3 3 3-3M1 5c1 4 5 4 6 1" stroke="#8b93a0" strokeWidth="2" fill="none" /><path d="M10 4q5-4 10 4l-3 1-4-3z" fill="#9aa3b0" stroke="#566" strokeWidth=".6" /></svg>} />
        <svg className="ml-auto mr-[13px] mt-[6px] shrink-0" width="9" height="14" viewBox="0 0 9 14" fill="none" stroke="#777"><path d="m1 .5 3 3-3 3M5 .5l3 3-3 3" /><path d="M2 11h5l-2.500 2.500z" fill="#777" stroke="none" /></svg>
      </div>
    </div>
  );
}

function Ruler() {
  const marks: ReactNode[] = [];
  for (let i = 1; i < 68; i++) {
    const x = i * 9.45 + 0.7;
    const cm = i / 4;
    if (i % 4 === 0) {
      marks.push(<path key={i} d={`M${x} 4v10`} stroke="#777" />);
      marks.push(<text key={`t${i}`} x={x + 2} y="9.500" fontSize="10" fill="#666">{cm}</text>);
    } else marks.push(<path key={i} d={`M${x} ${i % 2 === 0 ? 10 : 12}V14`} stroke="#777" />);
    marks.push(<path key={`a${i}`} d={`M${x + 3.15} 12.5V14M${x + 6.3} 12.5V14`} stroke="#999" />);
  }
  return (
    <svg width="647" height="15" viewBox="0 0 647 15" className={`overflow-visible bg-white ${UI}`}>
      {marks}
      <path d="M0 2l4.500 4.500L0 11zM0 8l4.500 3-4.500 3z" fill="#555" />
      <path d="M647 1v13h-3.500V11L641 7.500 647 1z" fill="#555" />
    </svg>
  );
}

const F2 = "w-[646px] h-[22px] leading-[22px]";
const Green = ({ h = "h-[16px]" }) => <div className={`ml-[96px] w-[643px] bg-[#d6e5bc] ${h}`} />;
const Para = ({ h, icon, children }: { h: string; icon?: ReactNode; children: ReactNode }) => (
  <div className={`flex ${h}`}>
    <div className="w-[96px] shrink-0 pl-[4px] pt-[3px]">{icon}</div>
    <div className="-mt-[4px]">{children}</div>
  </div>
);

function Report() {
  return (
    <div className="min-h-0 flex-1 overflow-hidden bg-white font-['Liberation_Sans',Arial,sans-serif] text-[13.333px] text-black">
      <div className="-mt-[5px]">
        <Para h="h-[49px]">
          <Line text="Die Aufstellung des Jahresabschlusses oblag dem Unternehmer, der über die Aus^übung aller mit der Auf^stel-^" className={F2} />
          <Line text="lung verbundener Gestal^tungsmöglichkeiten und Rechtsakte zu ent^schei^den hatte." className="h-[23px] w-[484px] leading-[23px]" />
        </Para>
        <Green />
        <Para h="h-[118px]">
          <Line text="Der uns erteilte Auftrag umfasste alle Tätigkeiten, die erforderlich wa^ren, um auf der Grundlage der Buchfüh-^" />
          <Line text="rung und der Inventur sowie der gegebenen Auskünfte zu An^satz-, Ausweis- und Bewertungsfragen und der" />
          <Line text="Vor^ga^ben zu den anzuwendenden Bilanzierungs- und Be^wer^tungsmethoden unter Vornahme der Abschluss-^" />
          <Line text="buch^ungen den steuerrechtlich vorgeschriebenen Jahres^ab^schluss, bestehend aus Bilanz und Gewinn- und" className={F2} />
          <Line text="Ver^lust^rechnung, zu erstellen." className="h-[23px] w-[174px] leading-[23px]" />
        </Para>
        <Green />
        <Para h="h-[73px]">
          <Line text="Im Rahmen des Erstellungsberichts berichten wir in be^rufs^üb^licher Form im Sinne der Verlautbarung der Bun-^" />
          <Line text="dessteuerberaterkammer zu den Grund^sät^zen für die Er^stel^lung von Jah^res^abschlüssen über Um^fang und Er-^" />
          <Line text="geb^nis un^se^rer Tä^tig^keit." className="h-[23px] w-[145px] leading-[23px]" />
        </Para>
        <Green />
        <Para h="h-[50px]" icon={<Assist />}>
          <Line text="Unsere Auftragsvereinbarungen sehen vor, dass eine Bezugnahme auf die Erstellung durch uns nur in Ver-^" />
          <Line text="bindung mit dem vol~lständigen von uns erstellten Jahresabschluss erfol^gen darf." className="h-[23px] w-[471px] leading-[23px]" />
        </Para>
        <Green />
        <div className="ml-[96px] h-[80px]">
          <Line text="Für die Durchführung des Auftrags und unsere Verantwortlichkeit sind, auch im Verhältnis zu Dritten, die die-^" className="h-[15px] w-[640px] leading-[15px]" />
          <Line text={'sem Bericht als Anlage beigefügten " Allgemeine Geschäftsbedingungen für rechts- und steuerberatende Be-'} className="h-[15px] w-[641px] leading-[15px]" />
          <Line text={'rufsangehörige und _Berufsausübungsgesellschaften_ " in der Fassung vom Januar 2025 maßgebend. Hier-'} className="h-[16px] w-[624px] leading-[15px]" />
          <Line text="nach ist un^sere Haf^tung nach Nr. 6 Abs. 1 Satz 1 auf den Betrag von 4 Millionen Euro begrenzt. Im Verhältnis" className="h-[15px] w-[645px] leading-[15px]" />
          <Line text="zu Drit^ten ist Nr. 6 Abs. 1 Satz 4 der All^ge^mei^nen Geschäftsbedingungen maßgebend." className="h-[15px] w-[505px] leading-[15px]" />
        </div>
        <Green />
        <div className="ml-[96px] flex h-[16px] w-[642px] items-center">
          <span className="h-px flex-1 bg-[repeating-linear-gradient(90deg,#111_0_4px,transparent_4px_6px)]" />
          <Fit className="mx-[5px] w-[144px] leading-4">manueller Seitenwechsel</Fit>
          <span className="h-px flex-1 bg-[repeating-linear-gradient(90deg,#111_0_4px,transparent_4px_6px)]" />
        </div>
        <Green />
        <Para h="h-[21px]" icon={<Info className="mt-px" />}>
          <Fit className="mt-[4px] w-[137px] font-bold leading-[17px]">Auftragsdurchführung</Fit>
        </Para>
        <Green />
        <Para h="h-[50px]">
          <Line text="Im Rahmen der Erstellung des Jahresabschlusses und bei unserer Berichterstattung hierüber haben wir die" />
          <Line text="ein^schlä^gi^gen Normen unserer Berufsordnung und unsere Berufspflichten beachtet." className="h-[23px] w-[491px] leading-[23px]" />
        </Para>
        <Green />
        <Para h="h-[95px]">
          <Line text="Die Erstellung des Jahresabschlusses umfasst die Tätigkei^ten, die er^for^der^lich sind, um auf Grund^la^ge der" />
          <Line text="Buch^führung und des Inventars sowie der eingeholten Vorga^ben zu den an^zu^wen^denden Bi^lanzie^rungs- und" />
          <Line text="Be^wertungsmethoden unter Vornahme der Abschlussbuch^ungen die ge^setz^lich vorge^schrie^bene Bilanz und" />
          <Line text="Ge^winn- und Verlustrechnung zu er^stel^len." className="h-[22px] w-[249px] leading-[22px]" />
        </Para>
        <Green />
        <Para h="h-[95px]">
          <Line text="Nicht zur Erstellung des Jahresabschlusses gehören die erforderlichen Entscheidungen über die Ausübung" />
          <Line text="materieller und formeller Gestaltungsmöglichkeiten (Ansatz-, Bewertungs- und Ausweiswahlrechte sowie Er-^" />
          <Line text="messensentscheidungen). Bestehende Gestaltungsmöglichkeiten wurden von uns im Rahmen der Erstellung" />
          <Line text="nach den Vor^gaben des Unternehmers ausgeübt." className="h-[22px] w-[290px] leading-[22px]" />
        </Para>
        <Green />
        <Para h="h-[50px]">
          <Line text="Bei der Erstellung des Jahresabschlusses haben wir die Grundsätze der Wirtschaftlichkeit und Wesentlichkeit" />
          <Line text="beachtet." className="h-[23px] w-[54px] leading-[23px]" />
        </Para>
        <Green />
        <Para h="h-[72px]">
          <Line text="Die Erstellung des Jahresabschlusses erforderte von uns die Kenntnis und Beachtung der hierfür geltenden" />
          <Line text="ge^setz^li^chen Vorschriften einschließlich der Grundsätze ordnungsmäßiger Buchführung sowie der einschlä-^" />
          <Line text="gigen fachlichen Verlautbarungen." className="h-[23px] w-[200px] leading-[23px]" />
        </Para>
        <Green />
        <Para h="h-[118px]">
          <Line text="Im Rahmen des erteilten Auftrags haben wir die gesetzlichen Vorschriften des Steuerrechts für die Auf^stel^lung" />
          <Line text="von Jah^res^ab^schlüssen sowie die Grundsätze ordnungsmäßiger Buchführung be^ach^tet. Die Be^ach^tung ande-^" />
          <Line text="rer ge^setz^licher Vorschriften sowie die Auf^de^ckung und Auf^klärung von Strafta^ten und außer^halb der Rech-^" />
          <Line text="nungs^le^gung began^gener Ordnungswidrigkei^ten waren nicht Gegen^stand unse^res Auftrags. Die Beurtei^lung" className={F2} />
          <Line text="von Art und Angemessenheit des Versiche^rungsschutzes war nicht Gegenstand unseres Auf^trags." className="h-[23px] w-[576px] leading-[23px]" />
        </Para>
        <Green />
        <Para h="h-[72px]" icon={<Assist />}>
          <Line text="Der Unternehmer hat uns die angeforderte berufsübliche Vollständigkeitserklärung bezüglich der Buch^füh-^" />
          <Line text="rung, Be^le^ge und Bestandsnachweise sowie der uns erteilten Auskünfte schriftlich erteilt, die wir zu den Ak^ten" />
          <Line text="ge^nom^men ha^ben." className="h-[23px] w-[109px] leading-[23px]" />
        </Para>
        <Green />
        <Para h="h-[50px]" icon={<Assist />}>
          <Line text="Hierin wurde uns von dem Unternehmer ver^si^chert, dass in der Bi^lanz al^le bi^lan^zierungs^pflich^ti^gen Ver^mö-^" />
          <Line text="gens^werte, Ver^bind^lichkeiten und Wagnisse des Unternehmens voll^stän^dig und richtig enthal^ten sind." className="h-[23px] w-[594px] leading-[23px]" />
        </Para>
        <Green h="h-px" />
      </div>
    </div>
  );
}

function Editor() {
  return (
    <div className="ml-[8px] mt-[3px] mb-[2px] flex min-w-0 flex-1 flex-col border-l-2 border-t border-[#a9adb4] border-b-2 bg-[#e7eaee]">
      <div className={`mt-[3px] flex h-[24px] shrink-0 text-black ${TAHOMA}`}>
        <span className="ml-[2px] flex w-[23px] items-center justify-center border border-[#b0b4ba] bg-[#dfe2e6]"><Info /></span>
        <span className="flex w-[195px] items-center justify-center border border-[#7b7d80] bg-[#b5dd6c] pb-[4px] shadow-[inset_0_0_0_1px_#fff]"><Fit className="w-[75px] text-[11.500px] font-bold leading-4">Handelsrecht</Fit></span>
        <span className="flex flex-1 items-center border-y border-l border-[#7b7d80] bg-[#fafaa2] pb-[4px] pl-[2px] shadow-[inset_1px_1px_0_#fff,inset_0_-1px_0_#fff]"><Fit className="w-[306px] text-[11.500px] font-bold leading-4">Text: (Ursprung: S100060), Zugehörigkeit: keine, aktiv</Fit></span>
      </div>
      <div className={`relative flex h-[22px] shrink-0 border-b border-[#b3b6bb] bg-linear-to-b from-[#e3e7ec] to-[#fcfcfd] ${UI}`}>
        <svg className="absolute left-[19px] top-[4px]" width="144" height="18" viewBox="0 0 144 18">
          <path d="M84.500 17.500V7Q86 1.500 90 1.500h48Q141 1.500 141 4v13.500z" fill="#f3f4f6" stroke="#aaaeb4" />
          <path d="M0 18 12 3Q14 .5 17 .5h64q3 0 3 3V18z" fill="#fff" stroke="#aaaeb4" />
        </svg>
        <Fit className="relative ml-[39px] mt-[5px] w-[55px] text-[12.500px] font-bold leading-4 text-[#129a94]">Dokument</Fit>
        <Fit className="relative ml-[20px] mt-[5px] w-[39px] text-[12.500px] leading-4 text-[#555]">Auftrag</Fit>
      </div>
      <div className="flex h-[26px] shrink-0 items-start border-t-2 border-white bg-[#eeeeee] pt-[3px]">
        <span className="ml-[3px] flex h-[15px] w-[15px] items-center justify-center border border-[#555] bg-white"><svg width="6" height="6" viewBox="0 0 6 6"><path d="M1 0v5h5" stroke="#444" strokeWidth="2" fill="none" /></svg></span>
        <span className="ml-[78px]"><Ruler /></span>
      </div>
      <Report />
    </div>
  );
}

function StatusBar() {
  const t = "text-[12.500px] leading-4";
  return (
    <div className={`flex h-[24px] shrink-0 items-center border-t border-[#8f959d] bg-linear-to-b from-[#e8eaed] to-[#c8cbcf] text-[#444] ${UI}`}>
      <Fit className={`ml-[8px] w-[133px] ${t}`}>Benutzer: Yvonne Drabent</Fit>
      <Sep className="ml-[52px] h-5 bg-[#8d9299]" />
      <svg className="ml-[10px]" width="16" height="15" viewBox="0 0 16 15"><path d="M0 0v15M1 3h14M1 12h7M15 0v14" stroke="#556" strokeWidth="1.500" /><path d="M3 5h3v2H3zM8 5h3v2H8zM3 9h4v2H3z" fill="#456f9b" /><path d="m9 5 6 5-6 5z" fill="#5fae3c" /></svg>
      <svg className="ml-[13px] overflow-visible" width="16" height="16" viewBox="0 0 16 16"><text x="7" y="6.500" fontSize="7" fontWeight="700" textAnchor="middle" fill="#444">ABC</text><path d="m2 10 4 4 8-8" stroke="#4a7fd0" strokeWidth="2.800" fill="none" /></svg>
      <Fit className={`ml-[13px] w-[65px] ${t}`}>Seite 3 (4/78)</Fit>
      <Fit className={`ml-[48px] w-[68px] ${t}`}>Hauptbericht</Fit>
      <div className="flex-1" />
      <Sep className="h-5 bg-[#8d9299]" />
      <Fit className={`ml-[15px] w-[74px] ${t}`}>Kontenzwecke</Fit>
      <Fit className={`ml-[68px] w-[21px] ${t}`}>IRW</Fit>
      <Fit className={`ml-[21px] w-[23px] ${t}`}>EINF</Fit>
      <Fit className={`ml-[18px] w-[17px] ${t}`}>AW</Fit>
      <Fit className={`ml-[64px] w-[164px] ${t}`}>L:\DATEV\DATEN\WP\STANDARD</Fit>
      <Sep className="ml-[17px] h-3 bg-[#8d9299]" />
      <span className="ml-px h-[18px] w-[8px] rounded-l-[3px] border border-r-0 border-[#c48a2a] bg-[#fbd97e]" />
    </div>
  );
}

function Task({ icon, label, w, bw, active }: { icon: ReactNode; label: string; w: string; bw: string; active?: boolean }) {
  return (
    <div className={`flex h-[40px] items-center border-b-2 border-[#76b9ed] pl-[6px] ${bw} ${active ? "bg-[#333438]" : ""}`}>
      <span className="flex w-[24px] justify-center">{icon}</span>
      <Fit className={`ml-[4px] text-[13px] leading-4 text-white ${w}`}>{label}</Fit>
    </div>
  );
}

function RemoteTaskbar() {
  return (
    <div className={`mb-px flex h-[40px] shrink-0 items-center bg-[#010204] ${UI}`}>
      <svg className="ml-[15px]" width="16" height="16" viewBox="0 0 16 16" fill="#fff"><path d="M0 2.300 6.500 1.400v6.200H0zM7.300 1.300 16 0v7.600H7.300zM0 8.400h6.500v6.200L0 13.700zM7.300 8.400H16V16l-8.700-1.300z" /></svg>
      <svg className="ml-[32px]" width="17" height="17" viewBox="0 0 17 17" fill="none" stroke="#fff" strokeWidth="1.300"><circle cx="10.500" cy="6.500" r="5.500" /><path d="m6.500 10.500-6 6" /></svg>
      <svg className="ml-[31px]" width="17" height="15" viewBox="0 0 17 15" fill="none" stroke="#fff" strokeWidth="1.200"><path d="M.5 0v2.500h11V0M.5 15v-2.500h11V15M.5 4.500h11v6H.5zM15 0v2M15 7v8" /><path d="M13.800 3.500h2.500V6h-2.500z" fill="#fff" stroke="none" /></svg>
      <div className="ml-[22px]">
        <Task bw="w-[152px]" w="w-[105px]" label="Intranet - KI - Alle ..." icon={
          <svg width="24" height="24" viewBox="0 0 24 24">
            <defs><linearGradient id="edg" x1="0" y1="0" x2="1" y2=".3"><stop stopColor="#2aa8e0" /><stop offset="1" stopColor="#5fdc5a" /></linearGradient></defs>
            <circle cx="12" cy="12" r="12" fill="#0e63b4" />
            <path d="M0 11C1 3 7 0 12 0c7 0 12 5 12 10 0 4-3 6-6.500 6-3 0-4-1.500-3-3 1.500-3-1-6-5-6C5 7 1 9 0 11z" fill="url(#edg)" />
            <path d="M9 11c-3 5 1 11 8 11-7 4-15-1-15-8 0-4 4-6 8-5-1 .5-1 1-1 2z" fill="#1b8bd8" />
            <path d="M14.500 13c-1 1.500 0 3 3 3h4c-2 3-5 4-8 3s-4-5-3-8c2-.5 4 0 4 2z" fill="#010204" />
          </svg>} />
      </div>
      <svg className="ml-[18px]" width="24" height="22" viewBox="0 0 24 22"><ellipse cx="12" cy="8" rx="11" ry="7" fill="#e9e9ee" stroke="#d3504c" strokeWidth="1.500" transform="rotate(-15 12 8)" /><path d="M1 12q6 6 13 2v3q-8 3-13-2z" fill="#b9bcc2" /><path d="m14 8 4 8M19 9l-4 7" stroke="#2f8fcd" strokeWidth="1.500" /><circle cx="14" cy="18" r="2" fill="none" stroke="#2f8fcd" strokeWidth="1.500" /><circle cx="20" cy="17" r="2" fill="none" stroke="#2f8fcd" strokeWidth="1.500" /></svg>
      <svg className="ml-[24px]" width="24" height="24" viewBox="0 0 24 24"><rect width="24" height="24" rx="3" fill="#175ddc" /><path d="M4.500 3h15v9c0 5-4 7.500-7.500 9.500C8.500 19.500 4.500 17 4.500 12z" fill="#fff" /><path d="M12 5.500h5V12c0 3.500-2.500 5-5 6.500z" fill="#175ddc" /></svg>
      <svg className="ml-[26px]" width="22" height="18" viewBox="0 0 22 18"><path d="M0 0h8l2 3h12v14H0z" fill="#e9a82a" /><path d="M0 5h22v12.500H0z" fill="#ffd35c" /><path d="M4 17.500V11h14v6.500h-4V14H8v3.500z" fill="#3f9ce0" /></svg>
      <div className="ml-[18px]">
        <Task bw="w-[152px]" w="w-[112px]" label="Calendar | Microsof..." icon={
          <span className="relative mr-[2px]"><Teams w={21} /><span className="absolute -right-[6px] top-[9px] flex h-[16px] w-[16px] items-center justify-center rounded-full bg-[#cf3522] text-[11px] leading-none text-white">2</span></span>} />
      </div>
      <div className="ml-[9px]"><Task bw="w-[152px]" w="w-[111px]" label="DATEV Arbeitsplatz ..." icon={
        <svg width="22" height="22" viewBox="0 0 22 22"><rect width="22" height="22" fill="#f4f6f0" /><path d="M10 0C3 4 2 9 6 13M14 0C7 4 7 8 9 12" stroke="#a8b0a0" fill="none" /><path d="M3 8c0 8 3 12 9 12 4 0 8-2 8-6-4 3-9 2-10-4z" fill="#7cbf24" stroke="#4f8a12" /></svg>} /></div>
      <div className="ml-[9px]"><Task bw="w-[152px]" w="w-[106px]" label="Posteingang - Yvo..." icon={
        <svg width="24" height="24" viewBox="0 0 24 24"><rect x="7" width="16" height="14" rx="1" fill="#28a8ea" /><path d="M7 0h8v7H7z" fill="#0f6cbd" /><path d="M15 7h8v7h-8z" fill="#1490df" /><path d="M6 11h18v12H6z" fill="#35b8f1" /><path d="m6 23 18-11v12H6z" fill="#1489d6" /><rect y="6" width="12" height="13" rx="1" fill="#0a64ae" /><circle cx="6" cy="12.500" r="3" fill="none" stroke="#fff" strokeWidth="1.800" /></svg>} /></div>
      <div className="ml-[8px]"><Task bw="w-[152px]" w="w-[111px]" label="neue AGBs - bitte b..." icon={
        <svg width="22" height="14" viewBox="0 0 22 14"><rect width="22" height="14" fill="#fafafa" /><rect x="16" y="1.500" width="4" height="4" fill="#3d79c9" /><path d="M5 10h9" stroke="#aaa" strokeWidth="1.500" /></svg>} /></div>
      <div className="ml-[5px]"><Task active bw="w-[160px]" w="w-[112px]" label="Testholz GmbH / 17..." icon={<WBadge s={21} className="ml-[6px]" />} /></div>
      <div className="flex-1" />
      <svg width="9" height="7" viewBox="0 0 9 7" fill="none" stroke="#fff" strokeWidth="1.300"><path d="m.5 6 5-5 5 5" /></svg>
    </div>
  );
}

function HostTaskbar() {
  return (
    <div className={`flex h-[48px] shrink-0 items-center bg-[linear-gradient(90deg,#27338c_0px,#2c3990_200px,#37449c_520px,#3a47a3_980px,#24319a_1070px,#23319a_1400px,#2b3a9b_1700px,#2f3c9c_2100px,#2a3799_2300px,#24308f_2500px,#323f9b_2850px,#2d3a96_3640px)] text-white ${UI}`}>
      <div className="relative h-[48px] w-[33px] overflow-visible">
        <div className="-ml-[2px] pt-[10px]"><Teams w={20} /></div>
        <span className="absolute left-[10px] top-[7px] flex h-[16px] w-[16px] items-center justify-center rounded-full bg-[#c9321f] text-[10px] leading-none">1</span>
        <span className="absolute bottom-[5px] left-[6px] h-[3px] w-[6px] rounded-full bg-[#a7aed6]" />
      </div>
      <div className="flex h-[40px] w-[40px] flex-col items-center rounded-[4px] border border-[#4d59ab] bg-[#3b479d] pt-[10px]">
        <svg width="21" height="18" viewBox="0 0 21 18"><rect width="21" height="14" rx="1" fill="#39a0de" stroke="#1c4f7c" /><path d="M9 14h3v2.500H9zM6 17h9" stroke="#223" fill="#223" /></svg>
        <span className="mt-[7px] h-[3px] w-[16px] rounded-full bg-[#9db9f5]" />
      </div>
      <div className="flex-1" />
      <svg width="11" height="7" viewBox="0 0 11 7" fill="none" stroke="#fff" strokeWidth="1.500"><path d="m.7 6 4.800-4.800L10.300 6" /></svg>
      <svg className="ml-[19px]" width="16" height="12" viewBox="0 0 16 12"><path d="M4 12a4 4 0 0 1-1-7.500A5 5 0 0 1 12 4a4 4 0 0 1 .5 8z" fill="#2aa4f4" /><path d="M3 11 11 4a4 4 0 0 1 2 8H4z" fill="#5cc8ff" /></svg>
      <span className="ml-[16px]"><Teams w={15} /></span>
      <svg className="ml-[18px]" width="14" height="14" viewBox="0 0 14 14"><circle cx="7" cy="7" r="7" fill="#2f86c8" /><path d="M7 2a5 5 0 1 0 5 5M7 4.500A2.500 2.500 0 1 0 9.500 7" stroke="#fff" fill="none" strokeWidth="1.300" /></svg>
      <svg className="ml-[17px]" width="16" height="16" viewBox="0 0 16 16"><rect width="16" height="16" rx="1" fill="#0b1045" /><circle cx="8" cy="8" r="6" fill="#fff" /><path d="M3.500 8h9M5.500 6 3.500 8l2 2M10.500 6l2 2-2 2" stroke="#0b1045" fill="none" strokeWidth="1.200" /><rect x="8" y="11.500" width="8" height="4.500" fill="#8ee000" /></svg>
      <svg className="ml-[16px]" width="15" height="15" viewBox="0 0 15 15" fill="none" stroke="#c9d0ef" strokeWidth="1.300"><path d="M14 1 1 7.500l6 1.500 4.500 5.300z" /></svg>
      <svg className="ml-[17px]" width="16" height="12" viewBox="0 0 16 12" fill="none" stroke="#fff" strokeWidth="1.300"><path d="M.5 4a11 11 0 0 1 15 0M3 6.800a7 7 0 0 1 10 0M5.300 9.200a4 4 0 0 1 5.400 0" /><circle cx="8" cy="11" r=".7" fill="#fff" /></svg>
      <svg className="ml-[8px]" width="16" height="13" viewBox="0 0 16 13" fill="none" stroke="#fff"><path d="M.5 4.500h2.500l3.500-3v10L3 8.500H.5zM8.500 4.500q1.500 2 0 4M10.500 3q3 3.500 0 7M12.700 1.500q4 5 0 10" /></svg>
      <div className="ml-[14px] mr-[19px] flex flex-col items-end">
        <Fit className="w-[29px] text-[12px] leading-4">13:22</Fit>
        <Fit className="w-[59px] text-[12px] leading-4">07.07.2026</Fit>
      </div>
    </div>
  );
}

export default function App() {
  return (
    <div className="flex h-[1600px] w-[3640px] flex-col overflow-hidden bg-[#4169e1]">
      <div className="flex h-[1552px]">
        <div className="w-[2px] bg-[linear-gradient(#6e6257_0_20%,#8f7f6d_40%,#5a5550_60%,#96866f_80%,#6d6050)]" />
        <div className="flex min-w-0 flex-1 flex-col">
          <TitleBar />
          <div className="ml-[1px] mr-[1px] flex min-h-0 flex-1 flex-col border-x border-t border-[#9fa7bd] bg-[#e2e6ea]">
            <QuickBar />
            <Tabs />
            <Ribbon />
            <div className="flex min-h-0 flex-1">
              <Sidebar />
              <Editor />
            </div>
            <StatusBar />
            <RemoteTaskbar />
          </div>
        </div>
      </div>
      <HostTaskbar />
    </div>
  );
}
